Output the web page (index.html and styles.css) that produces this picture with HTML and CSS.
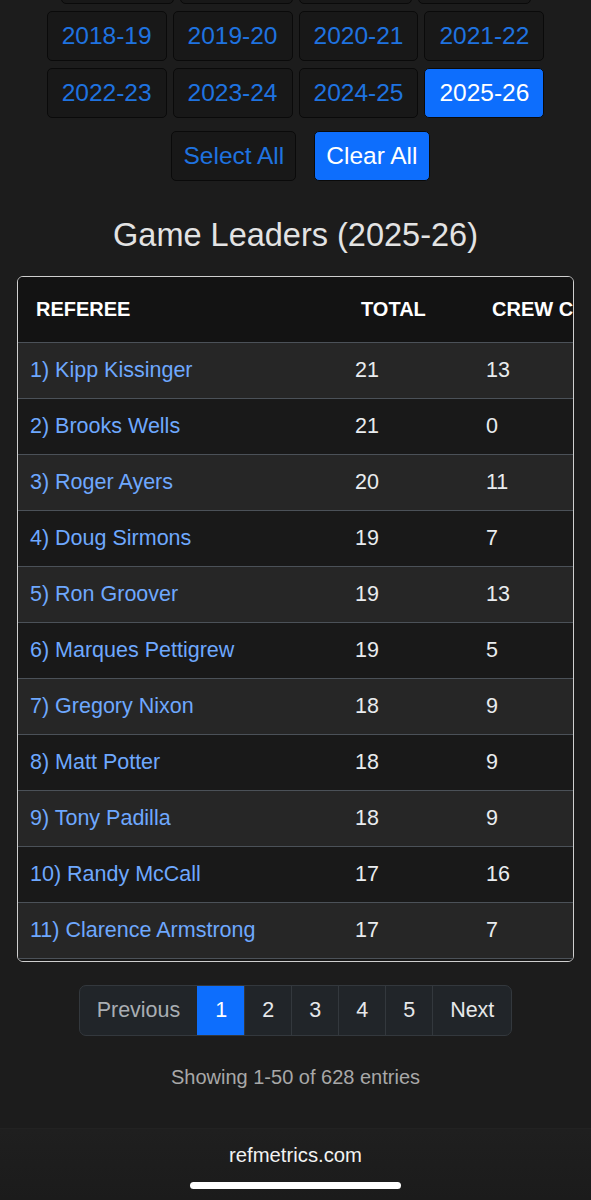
FILE: index.html
```html
<!DOCTYPE html>
<html lang="en">
<head>
<meta charset="utf-8">
<title>Game Leaders</title>
<link rel="stylesheet" href="styles.css">
</head>
<body>
<main class="page">
  <section class="seasons">
    <div class="season-grid">
      <button class="season" aria-label="2014-15"></button>
      <button class="season" aria-label="2015-16"></button>
      <button class="season" aria-label="2016-17"></button>
      <button class="season" aria-label="2017-18"></button>
      <button class="season">2018-19</button>
      <button class="season">2019-20</button>
      <button class="season">2020-21</button>
      <button class="season">2021-22</button>
      <button class="season">2022-23</button>
      <button class="season">2023-24</button>
      <button class="season">2024-25</button>
      <button class="season active">2025-26</button>
    </div>
    <div class="season-actions">
      <button class="season">Select All</button>
      <button class="season active">Clear All</button>
    </div>
  </section>

  <h2 class="title">Game Leaders (2025-26)</h2>

  <div class="table-wrap">
    <table class="leaders">
      <colgroup>
        <col class="c-ref"><col class="c-total"><col class="c-crew">
      </colgroup>
      <thead>
        <tr><th>REFEREE</th><th>TOTAL</th><th>CREW CHIEF</th></tr>
      </thead>
      <tbody>
        <tr><td><a href="#">1) Kipp Kissinger</a></td><td>21</td><td>13</td></tr>
        <tr><td><a href="#">2) Brooks Wells</a></td><td>21</td><td>0</td></tr>
        <tr><td><a href="#">3) Roger Ayers</a></td><td>20</td><td>11</td></tr>
        <tr><td><a href="#">4) Doug Sirmons</a></td><td>19</td><td>7</td></tr>
        <tr><td><a href="#">5) Ron Groover</a></td><td>19</td><td>13</td></tr>
        <tr><td><a href="#">6) Marques Pettigrew</a></td><td>19</td><td>5</td></tr>
        <tr><td><a href="#">7) Gregory Nixon</a></td><td>18</td><td>9</td></tr>
        <tr><td><a href="#">8) Matt Potter</a></td><td>18</td><td>9</td></tr>
        <tr><td><a href="#">9) Tony Padilla</a></td><td>18</td><td>9</td></tr>
        <tr><td><a href="#">10) Randy McCall</a></td><td>17</td><td>16</td></tr>
        <tr><td><a href="#">11) Clarence Armstrong</a></td><td>17</td><td>7</td></tr>
        <tr><td></td><td></td><td></td></tr>
      </tbody>
    </table>
  </div>

  <nav class="pager">
    <span class="pg disabled">Previous</span>
    <span class="pg current">1</span>
    <span class="pg">2</span>
    <span class="pg">3</span>
    <span class="pg">4</span>
    <span class="pg">5</span>
    <span class="pg">Next</span>
  </nav>

  <p class="showing">Showing 1-50 of 628 entries</p>
</main>

<footer class="safari-bar">
  <div class="url">refmetrics.com</div>
  <div class="home-indicator"></div>
</footer>
</body>
</html>
```

FILE: styles.css
```css
html {
  background: #1c1c1c;
}
body {
  margin: 0;
  height: 1200px;
  overflow: hidden;
  font-family: "Liberation Sans", Arial, sans-serif;
  color: #dee2e6;
  display: flex;
  flex-direction: column;
}
.page {
  flex: 1;
  display: flex;
  flex-direction: column;
  align-items: center;
  padding: 0 17px;
}
.seasons {
  display: flex;
  flex-direction: column;
  align-items: center;
  margin-top: -46px;
}
.season-grid {
  display: flex;
  flex-wrap: wrap;
  justify-content: center;
  gap: 7px 6px;
  width: 520px;
}
.season {
  font-family: "Liberation Sans", Arial, sans-serif;
  font-size: 24.5px;
  line-height: 30px;
  height: 50px;
  min-width: 113px;
  padding: 9px 14px;
  border: 1px solid #0a0a0a;
  border-radius: 5px;
  background: #181818;
  color: #1f73e0;
  box-sizing: border-box;
}
.season.active {
  background: #0d6efd;
  color: #ffffff;
}
.season-actions {
  display: flex;
  gap: 18px;
  margin-top: 13px;
  padding-left: 10px;
}
.season-actions .season {
  padding: 9px 11px;
}
.title {
  margin: 34px 0 21px;
  font-size: 32.5px;
  line-height: 40px;
  font-weight: 500;
  color: #e3e3e3;
}
.table-wrap {
  align-self: stretch;
  height: 686px;
  box-sizing: border-box;
  border: 1px solid #cfcfcf;
  border-radius: 6px;
  overflow: hidden;
}
.leaders {
  border-collapse: collapse;
  table-layout: fixed;
  width: 640px;
}
.c-ref { width: 325px; }
.c-total { width: 131px; }
.c-crew { width: 184px; }
.leaders th {
  height: 65px;
  padding: 0 18px;
  text-align: left;
  font-size: 20px;
  font-weight: 700;
  color: #ffffff;
  background: #131313;
  border-bottom: 1px solid #4b5158;
  white-space: nowrap;
  overflow: hidden;
}
.leaders td {
  height: 55px;
  padding: 0 12px;
  font-size: 21.5px;
  color: #e9ecef;
  border-bottom: 1px solid #4b5158;
  white-space: nowrap;
}
.leaders tbody tr:nth-child(odd) td {
  background: #262626;
}
.leaders tbody tr:nth-child(even) td {
  background: #191919;
}
.leaders a {
  color: #6ea8fe;
  text-decoration: none;
}
.pager {
  display: flex;
  margin-top: 23px;
  border: 1px solid #33383d;
  border-radius: 7px;
  overflow: hidden;
  background: #212529;
}
.pg {
  font-size: 21.5px;
  line-height: 49px;
  padding: 0 17px;
  color: #e6e8ea;
  border-left: 1px solid #33383d;
}
.pg:first-child {
  border-left: none;
}
.pg.disabled {
  color: #a9aeb3;
}
.pg.current {
  background: #0d6efd;
  color: #ffffff;
  border-left-color: #0d6efd;
}
.showing {
  margin: 29px 0 0;
  font-size: 20px;
  line-height: 24px;
  color: #a8a8a8;
}
.safari-bar {
  height: 72px;
  flex: none;
  background: linear-gradient(#1f1f1f, #1b1b1b);
  border-top: 1px solid #222222;
  display: flex;
  flex-direction: column;
  align-items: center;
  box-sizing: border-box;
  padding-top: 14px;
}
.url {
  font-size: 20.3px;
  line-height: 24px;
  color: #f2f2f2;
}
.home-indicator {
  margin-top: 15px;
  width: 211px;
  height: 7px;
  border-radius: 4px;
  background: #ffffff;
}
```
